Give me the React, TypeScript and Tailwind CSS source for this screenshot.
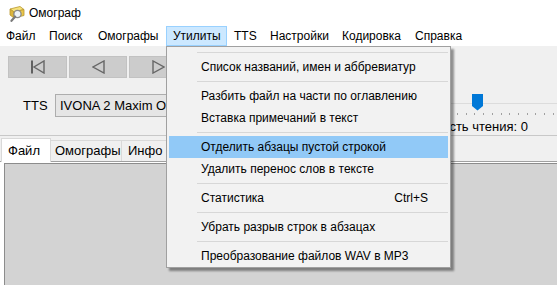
import React from 'react';

const menuBar = [
    { label: 'Файл', w: 'w-[42px] pl-[6px]' },
    { label: 'Поиск', w: 'w-[49px] pl-[7px]' },
    { label: 'Омографы', w: 'w-[75px] pl-[7px]' },
    { label: 'Утилиты', w: 'w-[61px] pl-[6px]', active: true },
    { label: 'TTS', w: 'w-[36px] pl-[7px]' },
    { label: 'Настройки', w: 'w-[72px] pl-[7px]' },
    { label: 'Кодировка', w: 'w-[73px] pl-[7px]' },
    { label: 'Справка', w: 'w-[60px] pl-[7px]' },
];

type Entry = { sep: true } | { sep?: false; label: string; shortcut?: string; hot?: boolean };

const utilities: Entry[] = [
    { sep: true },
    { label: 'Список названий, имен и аббревиатур' },
    { sep: true },
    { label: 'Разбить файл на части по оглавлению' },
    { label: 'Вставка примечаний в текст' },
    { sep: true },
    { label: 'Отделить абзацы пустой строкой', hot: true },
    { label: 'Удалить перенос слов в тексте' },
    { sep: true },
    { label: 'Статистика', shortcut: 'Ctrl+S' },
    { sep: true },
    { label: 'Убрать разрыв строк в абзацах' },
    { sep: true },
    { label: 'Преобразование файлов WAV в MP3' },
];

// yellow box with a magnifier, roughly like the app's title icon
const AppIcon = () => (
    <svg width="17" height="17" viewBox="0 0 17 17">
        <path d="M2 4 L12 1.5 L16 4.5 L6 7 Z" fill="#f6e27a" stroke="#b8952c" strokeWidth="0.8" />
        <path d="M2 4 L6 7 L6 13 L2 10 Z" fill="#dcb53c" stroke="#b8952c" strokeWidth="0.8" />
        <path d="M6 7 L16 4.5 L16 10.5 L6 13 Z" fill="#e9c64a" stroke="#b8952c" strokeWidth="0.8" />
        <circle cx="9.5" cy="9" r="3.6" fill="#eef3f6" stroke="#8a8a8a" strokeWidth="1.3" />
        <path d="M7.1 11.6 L3.5 15.8" stroke="#7a7a7a" strokeWidth="2.2" strokeLinecap="round" />
    </svg>
);

const Tri = ({ dir, bar }: { dir: 'left' | 'right'; bar?: boolean }) => (
    <svg width={bar ? 14 : 13} height="14" viewBox={bar ? '0 0 14 14' : '0 0 13 14'}>
        {bar && <rect x="0" y="0.5" width="2" height="13" fill="#606060" />}
        {dir === 'left' ? (
            <polygon points={bar ? '13,1 13,13 3,7' : '12,1 12,13 1,7'} fill="none" stroke="#666666" strokeWidth="1.4" />
        ) : (
            <polygon points="1,1 1,13 12,7" fill="none" stroke="#666666" strokeWidth="1.4" />
        )}
    </svg>
);

const NavButton = ({ w, children }: { w: string; children: React.ReactNode }) => (
    <div className={`${w} h-[22px] bg-[#cccccc] border border-[#c2c2c2] flex items-center justify-center`}>{children}</div>
);

const ticks = Array.from({ length: 12 });

export default function App() {
    return (
        <div className="w-[557px] h-[285px] overflow-hidden relative bg-[#f0f0f0] text-black text-[12px] font-['Liberation_Sans',Arial,sans-serif] flex flex-col">
            {/* title */}
            <div className="h-[26px] bg-white flex items-center pl-[8px] gap-[4px]">
                <AppIcon />
                <span className="leading-none">Омограф</span>
            </div>

            {/* menu bar */}
            <div className="h-[20px] bg-white flex">
                {menuBar.map((m) => (
                    <div
                        key={m.label}
                        className={`${m.w} flex items-center ${m.active ? 'bg-[#cce8ff] border border-[#99d1ff]' : ''}`}
                    >
                        {m.label}
                    </div>
                ))}
            </div>

            {/* nav buttons */}
            <div className="pt-[10px] pl-[8px] flex gap-[2px]">
                <NavButton w="w-[59px]">
                    <Tri dir="left" bar />
                </NavButton>
                <NavButton w="w-[58px]">
                    <Tri dir="left" />
                </NavButton>
                <NavButton w="w-[58px]">
                    <Tri dir="right" />
                </NavButton>
            </div>

            {/* TTS row */}
            <div className="h-[41px] mt-[16px] flex">
                <div className="flex items-start">
                    <span className="ml-[23px] w-[32px] h-[23px] flex items-center text-[13px]">TTS</span>
                    <div className="w-[260px] h-[23px] bg-[#e5e5e5] border border-[#adadad] flex items-center pl-[4px] text-[13px]">
                        IVONA 2 Maxim OEM
                    </div>
                </div>
                <div className="ml-auto w-[200px] flex flex-col">
                    <div className="relative h-[22px]">
                        <div className="absolute left-0 right-0 top-[9px] h-px bg-[#dcdcdc]" />
                        <div className="absolute left-[100px] w-[97px] top-[19px] h-[3px] flex justify-between">
                            {ticks.map((_, i) => (
                                <div key={i} className="w-px h-[2px] bg-[#a0a0a0]" />
                            ))}
                        </div>
                        <svg className="absolute left-[115px] top-0" width="11" height="17" viewBox="0 0 11 17">
                            <path d="M0 0 H11 V12 L5.5 16.5 L0 12 Z" fill="#0078d7" />
                        </svg>
                    </div>
                    <div className="flex justify-end pr-[29px] mt-[4px] whitespace-nowrap text-[13px] leading-[14px]">
                        Скорость чтения: 0
                    </div>
                </div>
            </div>
            <div className="h-px bg-[#c8c8c8]" />

            {/* tabs */}
            <div className="h-[25px] flex items-end pl-[1px]">
                <div className="w-[50px] h-[24px] -mb-px relative z-10 bg-white border-t border-l border-r border-[#d9d9d9] flex items-center pl-[6px] text-[13px]">
                    Файл
                </div>
                <div className="w-[71px] h-[21px] bg-[#f0f0f0] border-t border-r border-[#d9d9d9] flex items-center pl-[4px] text-[13px]">
                    Омографы
                </div>
                <div className="w-[50px] h-[21px] bg-[#f0f0f0] border-t border-r border-[#d9d9d9] flex items-center pl-[6px] text-[13px]">
                    Инфо
                </div>
            </div>
            <div className="flex-1 bg-white border-t border-[#a0a0a0] pt-px pl-[4px] flex">
                <div className="flex-1 border-t border-l border-[#8c8c8c] bg-[#d3d3d3]" />
            </div>

            {/* Утилиты dropdown */}
            <div className="absolute left-[166px] top-[46px] w-[285px] h-[222px] bg-[#f2f2f2] border border-[#a0a0a0] p-[2px] shadow-[3px_3px_2px_rgba(0,0,0,0.4)]">
                {utilities.map((e, i) =>
                    e.sep ? (
                        <div key={i} className="h-[7px] flex items-center pl-[28px]">
                            <div className="h-px w-full bg-[#d7d7d7]" />
                        </div>
                    ) : (
                        <div
                            key={i}
                            className={`h-[22px] flex items-center pl-[32px] pr-[20px] ${e.hot ? 'bg-[#91c9f7]' : ''}`}
                        >
                            <span className="flex-1">{e.label}</span>
                            {e.shortcut && <span>{e.shortcut}</span>}
                        </div>
                    )
                )}
            </div>
        </div>
    );
}
